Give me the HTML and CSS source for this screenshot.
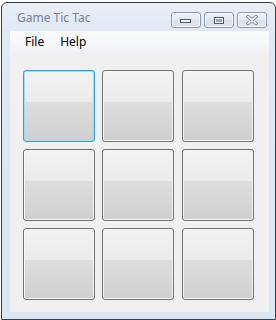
FILE: index.html
```html
<!DOCTYPE html>
<html>
<head>
<meta charset="utf-8">
<link rel="stylesheet" href="styles.css">
</head>
<body>
<div class="window">
  <div class="titlebar">
    <span class="title">Game Tic Tac</span>
    <div class="caption-buttons">
      <div class="cap-btn">
        <svg width="12" height="8" viewBox="0 0 12 8"><rect x="0.5" y="3.5" width="10" height="3" fill="#eef2f6" stroke="#4f5b6b"/></svg>
      </div>
      <div class="cap-btn">
        <svg width="12" height="9" viewBox="0 0 12 9"><rect x="1.5" y="1.5" width="9" height="6" fill="#eef2f6" stroke="#4f5b6b"/><rect x="3" y="3" width="6" height="3" fill="#9aa6b5"/></svg>
      </div>
      <div class="cap-btn">
        <svg width="12" height="10" viewBox="0 0 12 10"><path d="M2 1.5 L10 8.5 M10 1.5 L2 8.5" stroke="#6b7686" stroke-width="3.4" stroke-linecap="round"/><path d="M2 1.5 L10 8.5 M10 1.5 L2 8.5" stroke="#eef1f5" stroke-width="1.8" stroke-linecap="round"/></svg>
      </div>
    </div>
  </div>
  <div class="client">
    <div class="menubar">
      <span class="menu-item">File</span>
      <span class="menu-item">Help</span>
    </div>
    <div class="board">
      <button class="cell focused"></button>
      <button class="cell"></button>
      <button class="cell"></button>
      <button class="cell"></button>
      <button class="cell"></button>
      <button class="cell"></button>
      <button class="cell"></button>
      <button class="cell"></button>
      <button class="cell"></button>
    </div>
  </div>
</div>
</body>
</html>
```
FILE: styles.css
```css
html, body {
  margin: 0;
  padding: 0;
  background: #ffffff;
}
body {
  width: 276px;
  height: 320px;
  overflow: hidden;
  font-family: "Noto Sans", "Open Sans", sans-serif;
}
.window {
  box-sizing: border-box;
  margin: 2px 0 0 1px;
  width: 275px;
  height: 318px;
  border: 1px solid #3a3f46;
  border-radius: 6px 6px 0 0;
  background: linear-gradient(to bottom, #e9eef5 0px, #dfe8f3 30px, #dbe6f3 100%);
  padding: 0 6px 7px 8px;
  display: flex;
  flex-direction: column;
}
.titlebar {
  height: 28px;
  flex: none;
  display: flex;
  align-items: flex-start;
  justify-content: space-between;
  margin-left: -8px;
  margin-right: -6px;
  padding: 0 8px 0 15px;
}
.title {
  margin-top: 7px;
  font-size: 12px;
  line-height: 16px;
  color: #76818f;
}
.caption-buttons {
  display: flex;
  gap: 3px;
  margin-top: 9px;
}
.cap-btn {
  box-sizing: border-box;
  width: 30px;
  height: 16px;
  border: 1px solid #8e9cad;
  border-radius: 3px;
  background: linear-gradient(to bottom, #edf1f6 0%, #e3e9f1 50%, #d9e1ec 51%, #dfe6ef 100%);
  box-shadow: inset 0 0 0 1px rgba(255,255,255,0.6);
  display: flex;
  align-items: center;
  justify-content: center;
}
.client {
  flex: 1;
  background: #f0f0f0;
  display: flex;
  flex-direction: column;
}
.menubar {
  height: 21px;
  flex: none;
  display: flex;
  align-items: center;
  padding-left: 7px;
  background: linear-gradient(to bottom, #fbfbfc 0%, #f5f7fa 60%, #eef1f5 100%);
  font-size: 12px;
  color: #000;
}
.menu-item {
  padding: 0 8px;
  line-height: 16px;
}
.board {
  display: grid;
  grid-template-columns: 79px 80px 72px;
  grid-template-rows: 72px 72px 72px;
  row-gap: 7px;
  padding: 18px 0 0 13px;
}
.cell {
  box-sizing: border-box;
  width: 72px;
  height: 72px;
  margin: 0;
  padding: 0;
  border: 1px solid #707070;
  border-radius: 3px;
  background: linear-gradient(to bottom, #f2f2f2 0%, #ebebeb 45%, #dddddd 45%, #cfcfcf 100%);
  box-shadow: inset 0 0 0 1px #f8f8f8;
  outline: none;
}
.cell.focused {
  border-color: #28a3dc;
  box-shadow: inset 0 0 0 1px #9fdcf5;
}
```
